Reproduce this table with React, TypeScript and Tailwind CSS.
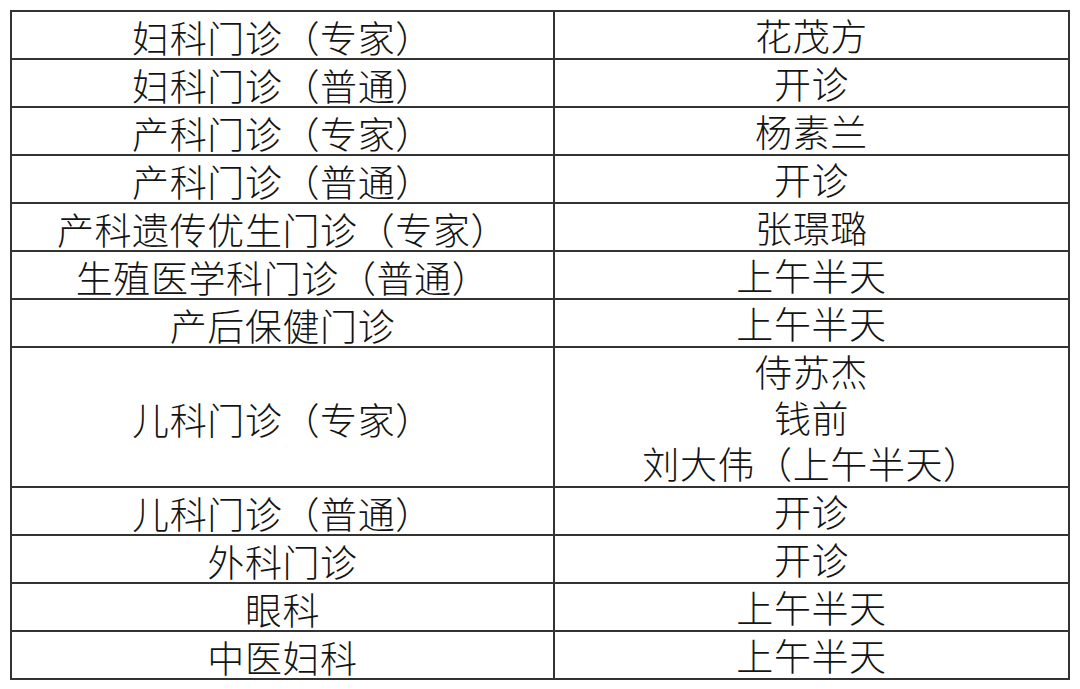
import React from 'react';

type Row = { dept: string; doctors: string[] };

const rows: Row[] = [
  { dept: '妇科门诊（专家）', doctors: ['花茂方'] },
  { dept: '妇科门诊（普通）', doctors: ['开诊'] },
  { dept: '产科门诊（专家）', doctors: ['杨素兰'] },
  { dept: '产科门诊（普通）', doctors: ['开诊'] },
  { dept: '产科遗传优生门诊（专家）', doctors: ['张璟璐'] },
  { dept: '生殖医学科门诊（普通）', doctors: ['上午半天'] },
  { dept: '产后保健门诊', doctors: ['上午半天'] },
  { dept: '儿科门诊（专家）', doctors: ['侍苏杰', '钱前', '刘大伟（上午半天）'] },
  { dept: '儿科门诊（普通）', doctors: ['开诊'] },
  { dept: '外科门诊', doctors: ['开诊'] },
  { dept: '眼科', doctors: ['上午半天'] },
  { dept: '中医妇科', doctors: ['上午半天'] },
];

export default function App() {
  return (
    <div
      className="w-[1080px] h-[689px] bg-white pt-[10px] pl-[10px] text-[#141414]"
      style={{ fontFamily: '"Noto Sans CJK SC", "Noto Sans CJK TC", sans-serif' }}
    >
      <div className="w-[1060px] border-2 border-[#333]">
        {rows.map((row, i) => (
          <div
            key={i}
            className={`flex ${i > 0 ? 'border-t-2 border-[#333]' : ''}`}
          >
            {/* department */}
            <div className="w-[543px] shrink-0 border-r-2 border-[#333] flex items-center justify-center text-[37px] tracking-[0.6px] font-light leading-[36px] pt-[4px] whitespace-nowrap">
              {row.dept}
            </div>
            {/* doctors / hours */}
            <div className="flex-1 flex flex-col items-center text-[37px] tracking-[0.6px] font-light">
              {row.doctors.map((d, j) => (
                <div key={j} className="h-[46px] leading-[36px] pt-[5px] whitespace-nowrap">{d}</div>
              ))}
            </div>
          </div>
        ))}
      </div>
    </div>
  );
}
